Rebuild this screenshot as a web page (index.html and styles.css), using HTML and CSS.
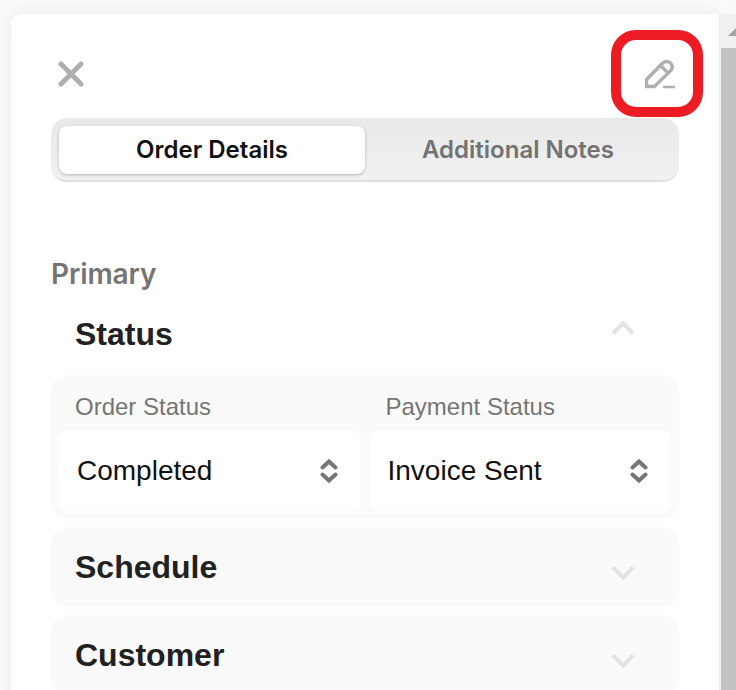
FILE: index.html
```html
<!DOCTYPE html>
<html lang="en">
<head>
<meta charset="utf-8">
<title>Order Details</title>
<link rel="stylesheet" href="styles.css">
</head>
<body>
<div class="stage">
  <main class="panel">
    <header class="toolbar">
      <button class="close" aria-label="Close">
        <svg width="26" height="26" viewBox="0 0 26 26"><path d="M3 3 23 23M23 3 3 23" fill="none" stroke="#afafaf" stroke-width="5" stroke-linecap="round"/></svg>
      </button>
      <button class="edit" aria-label="Edit">
        <svg width="32" height="30" viewBox="0 0 32 30"><path d="M2.500 27.500V20.500L18.500 4.200Q22.500 .800 26.500 4Q30 8 26.500 11.800L10.500 27.500ZM16.500 6.500 24 14" fill="none" stroke="#afafaf" stroke-width="3.400" stroke-linejoin="round"/><path d="M20 28H30" stroke="#afafaf" stroke-width="2.400" stroke-linecap="round"/></svg>
      </button>
    </header>
    <nav class="tabs">
      <button class="tab active">Order Details</button>
      <button class="tab">Additional Notes</button>
    </nav>
    <p class="group">Primary</p>
    <section>
      <div class="row open">
        <h2>Status</h2>
        <svg class="chevron" width="24" height="16" viewBox="0 0 24 16"><path d="M2 13.500 12 3.500 22 13.500" fill="none" stroke="#e2e2e2" stroke-width="4"/></svg>
      </div>
      <div class="fields">
        <div class="field">
          <span class="label">Order Status</span>
          <div class="select">Completed
            <svg width="18" height="26" viewBox="0 0 18 26"><path d="M2.500 9.500 9 3.500 15.500 9.500M2.500 16.500 9 22.500 15.500 16.500" fill="none" stroke="#757575" stroke-width="4" stroke-linecap="round"/></svg>
          </div>
        </div>
        <div class="field">
          <span class="label">Payment Status</span>
          <div class="select">Invoice Sent
            <svg width="18" height="26" viewBox="0 0 18 26"><path d="M2.500 9.500 9 3.500 15.500 9.500M2.500 16.500 9 22.500 15.500 16.500" fill="none" stroke="#757575" stroke-width="4" stroke-linecap="round"/></svg>
          </div>
        </div>
      </div>
    </section>
    <section class="row card">
      <h2>Schedule</h2>
      <svg class="chevron" width="24" height="16" viewBox="0 0 24 16"><path d="M2 2.500 12 12.500 22 2.500" fill="none" stroke="#e2e2e2" stroke-width="4"/></svg>
    </section>
    <section class="row card">
      <h2>Customer</h2>
      <svg class="chevron" width="24" height="16" viewBox="0 0 24 16"><path d="M2 2.500 12 12.500 22 2.500" fill="none" stroke="#e2e2e2" stroke-width="4"/></svg>
    </section>
  </main>
  <aside class="scrollbar">
    <svg width="17" height="34" viewBox="0 0 17 34"><path d="M9 22 17 14V22Z" fill="#a3a3a3"/></svg>
    <div class="thumb"></div>
  </aside>
</div>
</body>
</html>
```
FILE: styles.css
```css
* { box-sizing: border-box; }
body {
  margin: 0;
  height: 690px;
  overflow: hidden;
  background: #fafafa;
  font-family: "Liberation Sans", Arial, sans-serif;
}
button { border: 0; padding: 0; background: none; font: inherit; }
svg { display: block; flex: none; }
.stage {
  display: flex;
  height: 690px;
  padding: 14px 0 0 11px;
  overflow: hidden;
}
.panel {
  width: 708px;
  height: 740px;
  flex: none;
  padding: 16px 16px 0 40px;
  border-radius: 10px 0 0 0;
  background: #fff;
  box-shadow: 0 0 18px rgba(0, 0, 0, .07);
}
.toolbar {
  display: flex;
  justify-content: space-between;
  align-items: flex-start;
  height: 88px;
}
.close { margin: 30.5px 0 0 7px; }
.edit {
  display: flex;
  align-items: center;
  justify-content: center;
  width: 92px;
  height: 87px;
  padding-left: 6px;
  border: 10px solid #ed1c24;
  border-radius: 25px;
}
.tabs {
  display: flex;
  width: 628px;
  height: 64px;
  padding: 8px;
  border-bottom: 2px solid #dce0e5;
  border-radius: 16px;
  background: linear-gradient(#e9e9e9, #f0f0f0);
}
.tab {
  flex: 1;
  height: 48px;
  border-radius: 8px;
  color: #737373;
  font: 600 24px/48px Inter, sans-serif;
}
.tab.active {
  color: #111;
  background: #fff;
  box-shadow: 0 1px 3px rgba(0, 0, 0, .25);
}
.group {
  margin: 72px 0 0;
  color: #757575;
  font: 600 28px/40px Inter, sans-serif;
  letter-spacing: -.1px;
}
.row {
  display: flex;
  align-items: center;
  justify-content: space-between;
  width: 628px;
  height: 80px;
  padding: 0 44px 0 24px;
}
.row h2 {
  margin: 0;
  color: #212121;
  font-size: 32px;
  line-height: 40px;
}
.row.open { height: 81px; padding-bottom: 2px; }
.row.open .chevron { margin-bottom: 12px; }
.fields {
  display: flex;
  gap: 9px;
  width: 628px;
  height: 144px;
  padding: 8px;
  border-radius: 16px;
  background: #fafafa;
}
.field { flex: 1; }
.label {
  display: block;
  height: 48px;
  padding-left: 16px;
  color: #757575;
  font-size: 24px;
  line-height: 48px;
}
.select {
  display: flex;
  align-items: center;
  justify-content: space-between;
  height: 80px;
  padding: 0 23px 0 18px;
  border-radius: 8px;
  background: #fff;
  color: #111;
  font-size: 28px;
}
.card {
  margin-top: 8px;
  border-radius: 16px;
  background: #fafafa;
}
.card .chevron { margin-top: 12px; }
.scrollbar {
  flex: none;
  width: 17px;
  height: 676px;
  background: #f0f0f0;
}
.thumb {
  height: 642px;
  margin-left: 2px;
  background: #c1c1c1;
}
```
